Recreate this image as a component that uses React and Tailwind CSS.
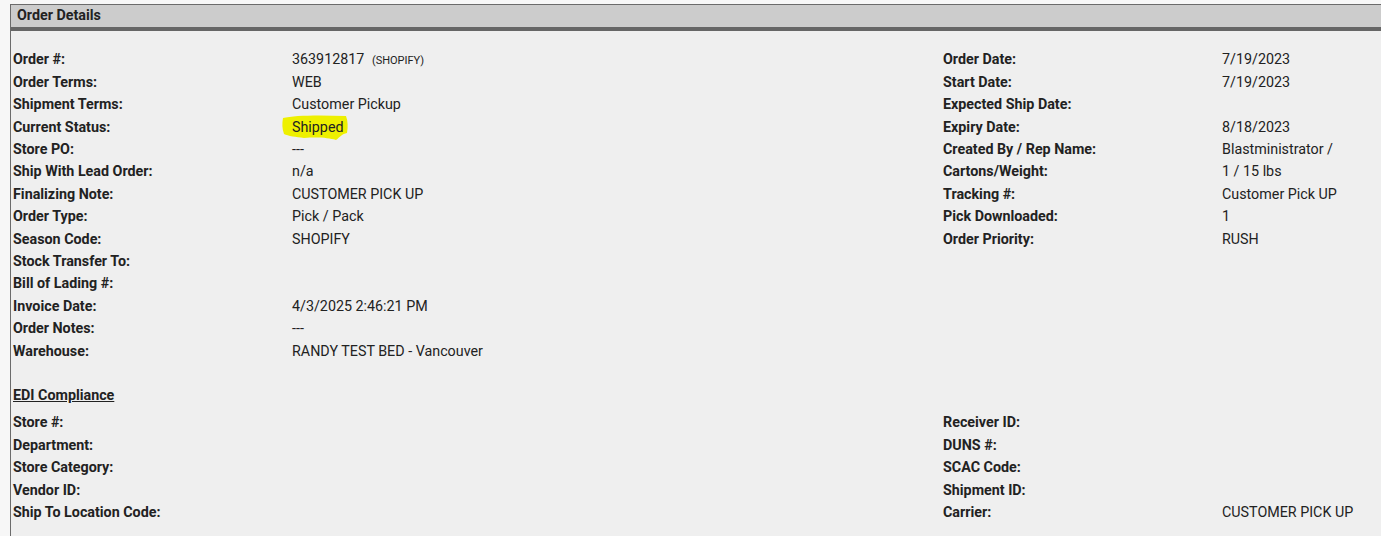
import React from "react";

const left = [
  ["Order #:", "order"],
  ["Order Terms:", "WEB"],
  ["Shipment Terms:", "Customer Pickup"],
  ["Current Status:", "status"],
  ["Store PO:", "---"],
  ["Ship With Lead Order:", "n/a"],
  ["Finalizing Note:", "CUSTOMER PICK UP"],
  ["Order Type:", "Pick / Pack"],
  ["Season Code:", "SHOPIFY"],
  ["Stock Transfer To:", ""],
  ["Bill of Lading #:", ""],
  ["Invoice Date:", "4/3/2025 2:46:21 PM"],
  ["Order Notes:", "---"],
  ["Warehouse:", "RANDY TEST BED - Vancouver"],
];

const right = [
  ["Order Date:", "7/19/2023"],
  ["Start Date:", "7/19/2023"],
  ["Expected Ship Date:", ""],
  ["Expiry Date:", "8/18/2023"],
  ["Created By / Rep Name:", "Blastministrator /"],
  ["Cartons/Weight:", "1 / 15 lbs"],
  ["Tracking #:", "Customer Pick UP"],
  ["Pick Downloaded:", "1"],
  ["Order Priority:", "RUSH"],
];

const ediLeft = ["Store #:", "Department:", "Store Category:", "Vendor ID:", "Ship To Location Code:"];
const ediRight = [
  ["Receiver ID:", ""],
  ["DUNS #:", ""],
  ["SCAC Code:", ""],
  ["Shipment ID:", ""],
  ["Carrier:", "CUSTOMER PICK UP"],
];

function Value({ v }) {
  if (v === "order") {
    return (
      <span>
        363912817 <span className="ml-1 text-[11px]">(SHOPIFY)</span>
      </span>
    );
  }
  if (v === "status") {
    return (
      <span className="relative inline-block">
        {/* marker highlight */}
        <svg
          className="absolute -left-[10px] -top-[2px]"
          width="68"
          height="26"
          viewBox="0 0 68 26"
        >
          <path
            d="M1 3 C12 0 40 0 64 1 C66 6 66 12 65 18 C60 19 58 22 54 25 C46 23 38 22 22 23 C14 22 6 21 2 19 C0 14 0 8 1 3 Z"
            fill="#eef000"
          />
        </svg>
        <span className="relative">Shipped</span>
      </span>
    );
  }
  return <span>{v}</span>;
}

function Row({ label, value, rLabel, rValue }) {
  return (
    <div className="grid grid-cols-[279px_651px_279px_1fr] h-[22.4px] items-center">
      <div className="font-bold">{label}</div>
      <div>{value ? <Value v={value} /> : null}</div>
      <div className="font-bold">{rLabel}</div>
      <div>{rValue}</div>
    </div>
  );
}

export default function App() {
  return (
    <div
      className="w-[1381px] h-[536px] bg-[#f7f7f7] pt-[4px] pl-[10px] overflow-hidden text-[14.3px] text-[#222]"
      style={{ fontFamily: "Roboto, 'Liberation Sans', sans-serif" }}
    >
      <div className="border-l border-t border-[#6b6b6b] bg-[#efefef] h-full">
        <div className="h-[22px] bg-[#cccccc] px-[6px] flex items-center text-[14.3px] font-bold">
          Order Details
        </div>
        <div className="h-[4px] bg-[#666666]" />
        <div className="pl-[2px] pt-[18px]">
          {left.map((l, i) => (
            <Row
              key={l[0]}
              label={l[0]}
              value={l[1]}
              rLabel={right[i] ? right[i][0] : ""}
              rValue={right[i] ? right[i][1] : ""}
            />
          ))}
          <div className="h-[22px]" />
          <div className="h-[22.4px] flex items-center font-bold underline">EDI Compliance</div>
          <div className="h-[5px]" />
          {ediLeft.map((l, i) => (
            <Row key={l} label={l} value="" rLabel={ediRight[i][0]} rValue={ediRight[i][1]} />
          ))}
        </div>
      </div>
    </div>
  );
}
